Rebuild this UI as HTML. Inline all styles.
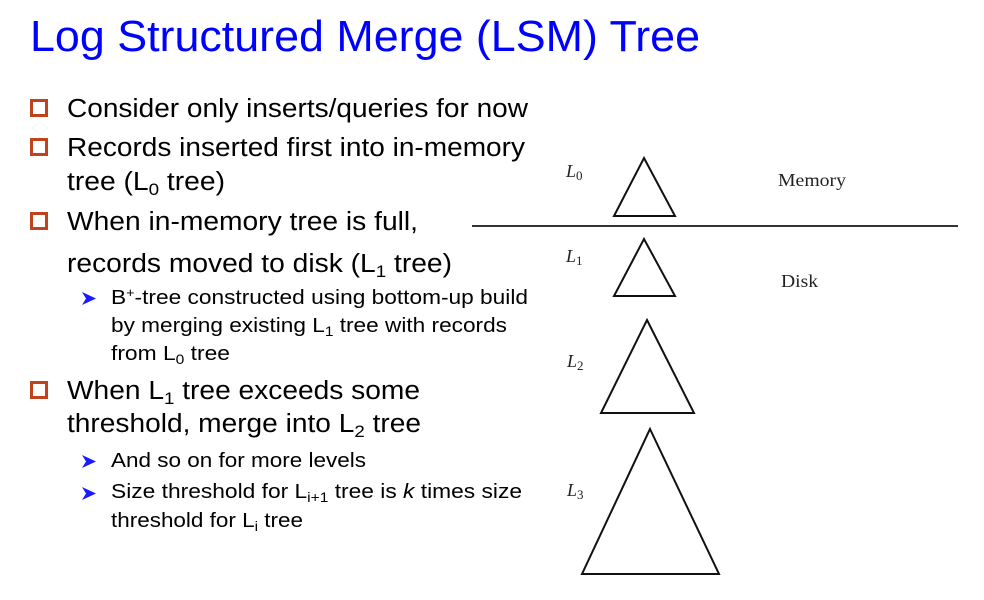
<!DOCTYPE html>
<html><head><meta charset="utf-8"><style>
html,body{margin:0;padding:0;background:#fff;width:984px;height:600px;overflow:hidden}
svg{display:block}
.s{font-family:"Liberation Sans",Arial,sans-serif;fill:#000}
.m{font-size:25.5px}
.b{font-size:20.5px}
.r{font-family:"Liberation Serif","Times New Roman",serif;fill:#222}
</style></head><body>
<svg width="984" height="600" viewBox="0 0 984 600" xmlns="http://www.w3.org/2000/svg">
<text x="30" y="51" class="s" style="font-size:44px;fill:#0000ff" textLength="670" lengthAdjust="spacingAndGlyphs">Log Structured Merge (LSM) Tree</text>

<g fill="none" stroke="#c0431f" stroke-width="3">
<rect x="31.5" y="100.5" width="15" height="15"/>
<rect x="31.5" y="139.5" width="15" height="15"/>
<rect x="31.5" y="213.5" width="15" height="15"/>
<rect x="31.5" y="382.5" width="15" height="15"/>
</g>
<g fill="#1a1aff">
<polygon points="82,292 96,298.5 82,305 86,298.5"/>
<polygon points="82,455 96,461.5 82,468 86,461.5"/>
<polygon points="82,487 96,493.5 82,500 86,493.5"/>
</g>

<text x="67" y="117" class="s m" textLength="461" lengthAdjust="spacingAndGlyphs">Consider only inserts/queries for now</text>
<text x="67" y="156" class="s m" textLength="458" lengthAdjust="spacingAndGlyphs">Records inserted first into in-memory</text>
<text x="67" y="190" class="s m" textLength="158" lengthAdjust="spacingAndGlyphs">tree (L<tspan font-size="17" dy="5">0</tspan><tspan dy="-5"> tree)</tspan></text>
<text x="67" y="230" class="s m" textLength="351" lengthAdjust="spacingAndGlyphs">When in-memory tree is full,</text>
<text x="67" y="272" class="s m" textLength="385" lengthAdjust="spacingAndGlyphs">records moved to disk (L<tspan font-size="17" dy="5">1</tspan><tspan dy="-5"> tree)</tspan></text>
<text x="111" y="304" class="s b" textLength="417" lengthAdjust="spacingAndGlyphs">B<tspan font-size="13" dy="-7">+</tspan><tspan dy="7">-tree constructed using bottom-up build</tspan></text>
<text x="111" y="332" class="s b" textLength="396" lengthAdjust="spacingAndGlyphs">by merging existing L<tspan font-size="14" dy="4">1</tspan><tspan dy="-4"> tree with records</tspan></text>
<text x="111" y="360" class="s b" textLength="119" lengthAdjust="spacingAndGlyphs">from L<tspan font-size="14" dy="4">0</tspan><tspan dy="-4"> tree</tspan></text>
<text x="67" y="399" class="s m" textLength="353" lengthAdjust="spacingAndGlyphs">When L<tspan font-size="17" dy="5">1</tspan><tspan dy="-5"> tree exceeds some</tspan></text>
<text x="67" y="432" class="s m" textLength="354" lengthAdjust="spacingAndGlyphs">threshold, merge into L<tspan font-size="17" dy="5">2</tspan><tspan dy="-5"> tree</tspan></text>
<text x="111" y="467" class="s b" textLength="255" lengthAdjust="spacingAndGlyphs">And so on for more levels</text>
<text x="111" y="498" class="s b" textLength="411" lengthAdjust="spacingAndGlyphs">Size threshold for L<tspan font-size="14" dy="4">i+1</tspan><tspan dy="-4"> tree is </tspan><tspan font-style="italic">k</tspan> times size</text>
<text x="111" y="527" class="s b" textLength="192" lengthAdjust="spacingAndGlyphs">threshold for L<tspan font-size="14" dy="4">i</tspan><tspan dy="-4"> tree</tspan></text>

<line x1="472" y1="226" x2="958" y2="226" stroke="#333" stroke-width="2"/>
<g fill="none" stroke="#111" stroke-width="2" stroke-linejoin="miter">
<polygon points="644,158 675,216 614,216"/>
<polygon points="644,239 675,296 614,296"/>
<polygon points="647,320 694,413 601,413"/>
<polygon points="650,429 719,574 582,574"/>
</g>
<g class="r" font-style="italic" font-size="18">
<text x="566" y="177">L<tspan font-size="13" font-style="normal" dy="3">0</tspan></text>
<text x="566" y="262">L<tspan font-size="13" font-style="normal" dy="3">1</tspan></text>
<text x="567" y="367">L<tspan font-size="13" font-style="normal" dy="3">2</tspan></text>
<text x="567" y="496">L<tspan font-size="13" font-style="normal" dy="3">3</tspan></text>
</g>
<text x="778" y="186" class="r" font-size="18" textLength="68" lengthAdjust="spacingAndGlyphs">Memory</text>
<text x="781" y="287" class="r" font-size="18" textLength="37" lengthAdjust="spacingAndGlyphs">Disk</text>
</svg>
</body></html>
